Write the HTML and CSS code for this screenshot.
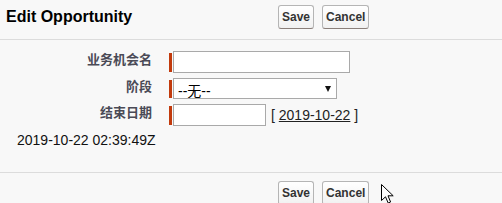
FILE: index.html
```html
<!DOCTYPE html>
<html>
<head>
<meta charset="utf-8">
<link rel="stylesheet" href="styles.css">
</head>
<body>
<div class="page">
  <div class="header">
    <h2 class="title">Edit Opportunity</h2>
    <div class="buttons">
      <button class="btn">Save</button>
      <button class="btn">Cancel</button>
    </div>
  </div>
  <div class="form">
    <div class="label">业务机会名</div>
    <div class="field"><span class="req"></span><input class="text name" type="text"></div>
    <div class="label">阶段</div>
    <div class="field"><span class="req"></span><span class="select-wrap"><select class="select"><option>--无--</option></select></span></div>
    <div class="label">结束日期</div>
    <div class="field"><span class="req"></span><input class="text date" type="text"><span class="datelink">[&nbsp;<a href="#">2019-10-22</a>&nbsp;]</span></div>
  </div>
  <div class="stamp">2019-10-22 02:39:49Z</div>
  <div class="footer">
    <div class="buttons">
      <button class="btn">Save</button>
      <button class="btn">Cancel</button>
    </div>
  </div>
  <svg class="cursor" width="14" height="21" viewBox="0 0 14 21"><path d="M0.5 0.5 L0.5 16.5 L4.5 12.8 L7.2 19 L9.6 18 L7 11.8 L12.2 11.8 Z" fill="#fff" stroke="#000" stroke-width="1" stroke-linejoin="miter"/></svg>
</div>
</body>
</html>
```
FILE: styles.css
```css
html, body {
  margin: 0;
  padding: 0;
  background: #f8f8f8;
}
.page {
  position: relative;
  width: 502px;
  height: 203px;
  overflow: hidden;
  font-family: "Liberation Sans", Arial, sans-serif;
  color: #222;
}
.header {
  display: flex;
  align-items: center;
  height: 35px;
  padding-top: 5px;
  box-sizing: border-box;
  height: 40px;
  align-items: flex-start;
  border-bottom: 1px solid #dcdcdc;
}
.title {
  flex: 0 0 272px;
  margin: 0;
  padding-left: 6px;
  font-size: 16px;
  font-weight: bold;
  color: #000;
  line-height: 18px;
  padding-top: 3px;
}
.buttons {
  display: flex;
  gap: 8px;
}
.btn {
  height: 24px;
  padding: 0 3px;
  font-family: "Liberation Sans", Arial, sans-serif;
  font-size: 12px;
  font-weight: bold;
  color: #333;
  background: linear-gradient(#ffffff, #f1f1f1);
  border: 1px solid #b5b5b5;
  border-bottom-color: #8a7f7a;
  border-radius: 3px;
}
.form {
  display: grid;
  grid-template-columns: 152px 1fr;
  column-gap: 17px;
  row-gap: 5px;
  padding-top: 11px;
}
.label {
  text-align: right;
  font-family: "Noto Sans CJK SC", sans-serif;
  font-weight: bold;
  font-size: 13px;
  line-height: 16px;
  color: #4a4a56;
}
.field {
  display: flex;
  align-items: center;
}
.req {
  align-self: stretch;
  width: 3px;
  margin: 2px 1px 1px 0;
  background: #c23a0c;
}
.text {
  box-sizing: border-box;
  height: 22px;
  margin: 0;
  border: 1px solid #a9a9a9;
  background: #fff;
  padding: 1px 3px;
}
.name {
  width: 177px;
}
.date {
  width: 93px;
}
.select-wrap {
  position: relative;
  display: block;
}
.select-wrap::after {
  content: "";
  position: absolute;
  left: 152px;
  top: 8px;
  border-left: 3px solid transparent;
  border-right: 3px solid transparent;
  border-top: 6px solid #111;
  pointer-events: none;
}
.select {
  appearance: none;
  -webkit-appearance: none;
  box-sizing: border-box;
  display: block;
  width: 164px;
  height: 21px;
  margin: 0;
  padding: 4px 0 0 4px;
  font-family: "Liberation Sans", "Noto Sans CJK SC", sans-serif;
  font-size: 14px;
  line-height: 16px;
  color: #000;
  background: #fff;
  border: 1px solid #a9a9a9;
  border-radius: 0;
}
.datelink {
  margin-left: 5px;
  font-size: 14px;
  color: #222;
}
.datelink a {
  color: #222;
  text-decoration: underline;
}
.stamp {
  margin-top: 6px;
  padding-left: 17px;
  font-size: 14px;
  line-height: 16px;
  color: #111;
  height: 40px;
  border-bottom: 1px solid #dcdcdc;
}
.footer {
  padding: 8px 0 0 278px;
}
.cursor {
  position: absolute;
  left: 381px;
  top: 184px;
}
```
